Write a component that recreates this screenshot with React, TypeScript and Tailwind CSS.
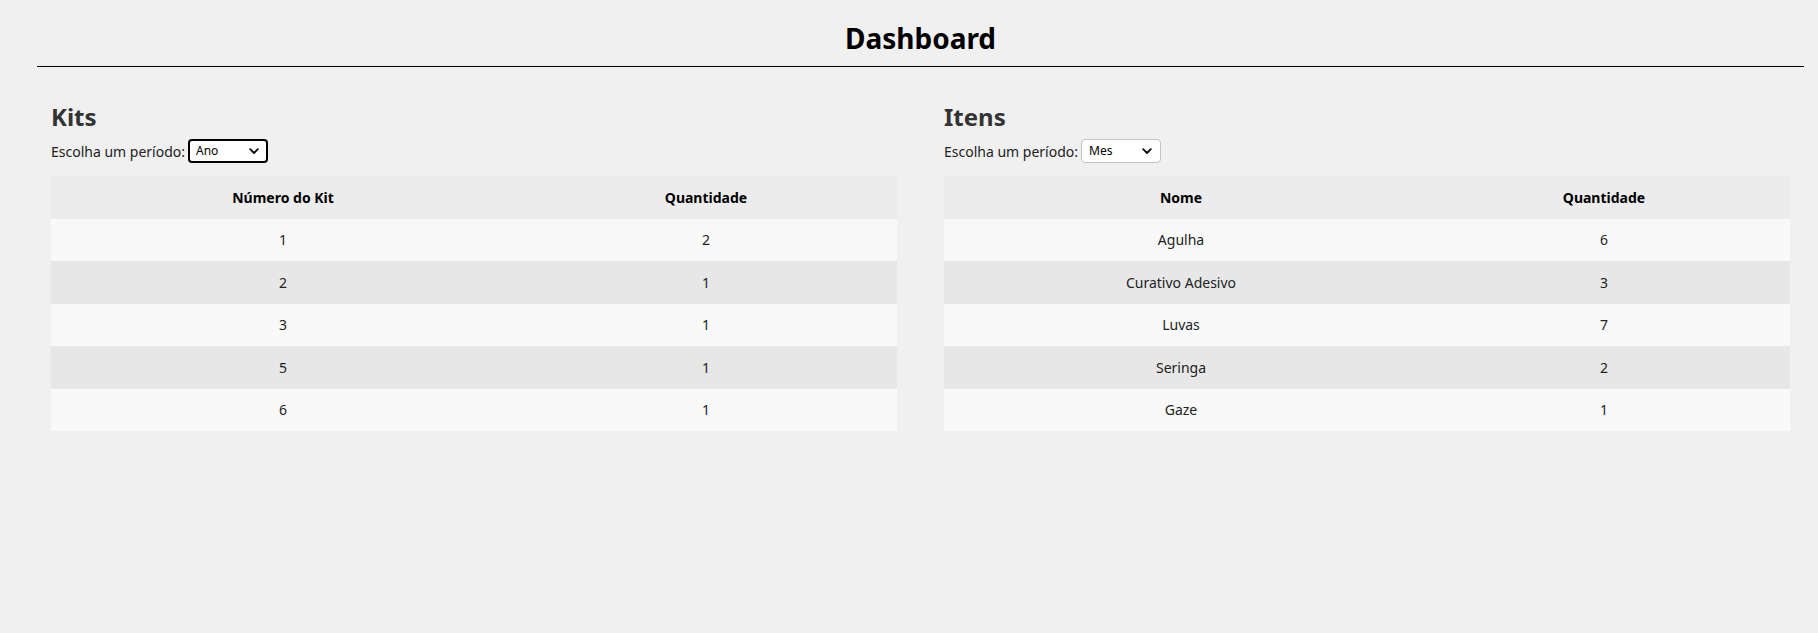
import React from "react";

function Chevron() {
  return (
    <svg width="10" height="7" viewBox="0 0 10 7" className="shrink-0">
      <path d="M1.2 1.2 L5 5 L8.8 1.2" fill="none" stroke="#111" strokeWidth="1.9" strokeLinecap="round" strokeLinejoin="round" />
    </svg>
  );
}

function Picker({ value, focused }: { value: string; focused?: boolean }) {
  return (
    <div
      className={
        focused
          ? "ml-[3px] flex h-[24px] w-[80px] items-center justify-between rounded-[4px] border-2 border-black bg-white pl-[6px] pr-[7px] text-[12px] text-black"
          : "ml-[3px] flex h-[24px] w-[80px] items-center justify-between rounded-[4px] border border-[#c4c4c4] bg-white pl-[7px] pr-[8px] text-[12px] text-black"
      }
    >
      <span>{value}</span>
      <Chevron />
    </div>
  );
}

type Row = [string, string];

function Section({
  title,
  value,
  focused,
  head,
  rows,
  col1,
}: {
  title: string;
  value: string;
  focused?: boolean;
  head: Row;
  rows: Row[];
  col1: string;
}) {
  return (
    <div className="flex w-[846px] flex-col">
      <h2 className="mt-[34px] h-[32px] text-[24px] font-bold leading-[32px] text-[#333333]">{title}</h2>
      <div className="mt-[6px] flex h-[24px] items-center text-[14px] text-[#222]">
        <span>Escolha um período:</span>
        <Picker value={value} focused={focused} />
      </div>
      <div className="mt-[13px] flex flex-col">
        <div className="flex h-[42.5px] items-center bg-[#ececec] text-[14px] font-bold text-black">
          <div className={col1 + " text-center"}>{head[0]}</div>
          <div className="flex-1 text-center">{head[1]}</div>
        </div>
        {rows.map((r, i) => (
          <div
            key={i}
            className={
              i % 2 === 0
                ? "flex h-[42.5px] items-center bg-[#f9f9f9] text-[14px] text-[#222]"
                : "flex h-[42.5px] items-center bg-[#e7e7e7] text-[14px] text-[#222]"
            }
          >
            <div className={col1 + " text-center"}>{r[0]}</div>
            <div className="flex-1 text-center">{r[1]}</div>
          </div>
        ))}
      </div>
    </div>
  );
}

export default function App() {
  return (
    <div
      className="min-h-[633px] bg-[#f0f0f0] pl-[37px] pr-[14px]"
      style={{ fontFamily: '"Noto Sans", "Open Sans", sans-serif' }}
    >
      <h1 className="pt-[19px] text-center text-[28px] font-bold leading-[38px] text-black">Dashboard</h1>
      <div className="mt-[9px] h-px bg-black" />
      <div className="flex gap-[47px] px-[14px]">
        <Section
          title="Kits"
          value="Ano"
          focused
          head={["Número do Kit", "Quantidade"]}
          col1="w-[464px]"
          rows={[
            ["1", "2"],
            ["2", "1"],
            ["3", "1"],
            ["5", "1"],
            ["6", "1"],
          ]}
        />
        <Section
          title="Itens"
          value="Mes"
          head={["Nome", "Quantidade"]}
          col1="w-[474px]"
          rows={[
            ["Agulha", "6"],
            ["Curativo Adesivo", "3"],
            ["Luvas", "7"],
            ["Seringa", "2"],
            ["Gaze", "1"],
          ]}
        />
      </div>
    </div>
  );
}
